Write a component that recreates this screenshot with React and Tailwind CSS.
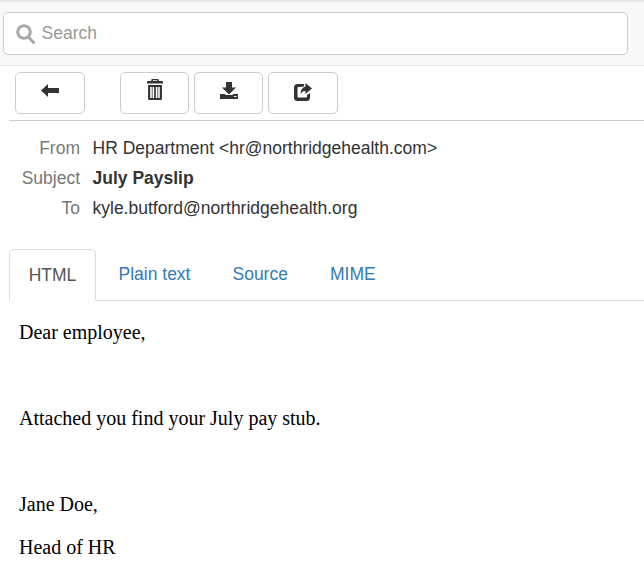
const tabs = ['Plain text', 'Source', 'MIME']

function BackIcon() {
  return (
    <svg className="mb-[6px]" width="18" height="13" viewBox="0 0 18 13" fill="#333">
      <path d="M0 6.500 L7 0 V4 H18 V9 H7 V13 Z" />
    </svg>
  )
}

function TrashIcon() {
  return (
    <svg className="mb-[7px]" width="16" height="21" viewBox="0 0 15 21" preserveAspectRatio="none" fill="#333">
      <path d="M4 2 V1 Q4 0 5 0 H10 Q11 0 11 1 V2 H14 Q15 2 15 3 V4.500 H0 V3 Q0 2 1 2 Z M5.500 1.200 V2 H9.500 V1.200 Z" fillRule="evenodd" />
      <path d="M1 6 H14 V20 Q14 21 13 21 H2 Q1 21 1 20 Z M3 8 V19 H4.500 V8 Z M5.200 8 V19 H6.700 V8 Z M8.300 8 V19 H9.800 V8 Z M10.500 8 V19 H12 V8 Z" fillRule="evenodd" />
    </svg>
  )
}

function DownloadIcon() {
  return (
    <svg className="mb-[6px]" width="18" height="17" viewBox="0 0 18 17" fill="#333">
      <path d="M6 0 H12 V5.500 H16 L9 12.500 L2 5.500 H6 Z" />
      <path d="M0 12 H4.500 L6 13 H12 L13.500 12 H18 V17 H0 Z M14 14 V15 H16.500 V14 Z" fillRule="evenodd" />
    </svg>
  )
}

function ShareIcon() {
  return (
    <svg className="mb-[4px]" width="18" height="19" viewBox="0 0 18 19" fill="#333">
      <path d="M11.500 1 L18 6.500 L11.500 12 V9 Q8.500 8.500 6.500 12 Q6.500 6 11.500 4.500 Z" />
      <path d="M3.500 2 H10 V4.500 Q7.500 4.700 6 5 H4.500 Q3.500 5 3.500 6 V14.500 Q3.500 15.500 4.500 15.500 H12 Q13 15.500 13 14.500 V13 L16 11 V15.500 Q16 19 12.500 19 H3.500 Q0 19 0 15.500 V5.500 Q0 2 3.500 2 Z" />
    </svg>
  )
}

function ToolButton({ className, children }) {
  return (
    <button
      type="button"
      className={`h-[42px] flex items-center justify-center bg-white border border-[#ccc] rounded-[5px] ${className}`}
    >
      {children}
    </button>
  )
}

export default function App() {
  return (
    <div className="h-[571px] overflow-hidden bg-white text-[17.5px] text-[#333] [font-family:'Liberation_Sans',Arial,sans-serif]">
      <div className="h-[66px] bg-[#f8f8f8] border-t-2 border-b border-[#e7e7e7] pt-[10px] pl-[3px] pr-[16px]">
        <div className="h-[43px] flex items-center bg-white border border-[#ccc] rounded-[5px] pl-[12px]">
          <svg width="19" height="20" viewBox="0 0 19 20" fill="none" stroke="#a8a8a8" strokeWidth="3">
            <circle cx="8" cy="8" r="6.300" />
            <path d="M12.500 13 L17.500 18.500" strokeLinecap="round" />
          </svg>
          <span className="ml-[6.500px] text-[#999]">Search</span>
        </div>
      </div>

      <div className="flex pt-[6px] pl-[15px]">
        <ToolButton className="w-[70px] mr-[35px]">
          <BackIcon />
        </ToolButton>
        <ToolButton className="w-[69px] mr-[5px]">
          <TrashIcon />
        </ToolButton>
        <ToolButton className="w-[69px] mr-[5px]">
          <DownloadIcon />
        </ToolButton>
        <ToolButton className="w-[70px]">
          <ShareIcon />
        </ToolButton>
      </div>

      <div className="ml-[9px] mt-[6px] border-t border-[#ccc] pt-[12px]">
        <div className="grid grid-cols-[71px_1fr] gap-x-[12.500px] leading-[30px]">
          <div className="text-right text-[#777]">From</div>
          <div>HR Department &lt;hr@northridgehealth.com&gt;</div>
          <div className="text-right text-[#777]">Subject</div>
          <div className="font-bold">July Payslip</div>
          <div className="text-right text-[#777]">To</div>
          <div>kyle.butford@northridgehealth.org</div>
        </div>

        <div className="flex mt-[26px] h-[52px] border-b border-[#ddd]">
          <div className="h-[52px] w-[87px] flex items-center justify-center bg-white text-[#555] border border-[#ddd] border-b-white rounded-t-[5px]">
            HTML
          </div>
          <div className="flex ml-[1.500px]">
            {tabs.map((t) => (
              <div key={t} className="px-[21px] flex items-center text-[#337ab7]">
                {t}
              </div>
            ))}
          </div>
        </div>
      </div>

      <div className="pl-[19px] pt-[20px] text-[20px] leading-[22px] text-black [font-family:'Liberation_Serif','Times_New_Roman',serif]">
        <p>Dear employee,</p>
        <p className="mt-[64px]">Attached you find your July pay stub.</p>
        <p className="mt-[64px]">Jane Doe,</p>
        <p className="mt-[21px]">Head of HR</p>
      </div>
    </div>
  )
}
